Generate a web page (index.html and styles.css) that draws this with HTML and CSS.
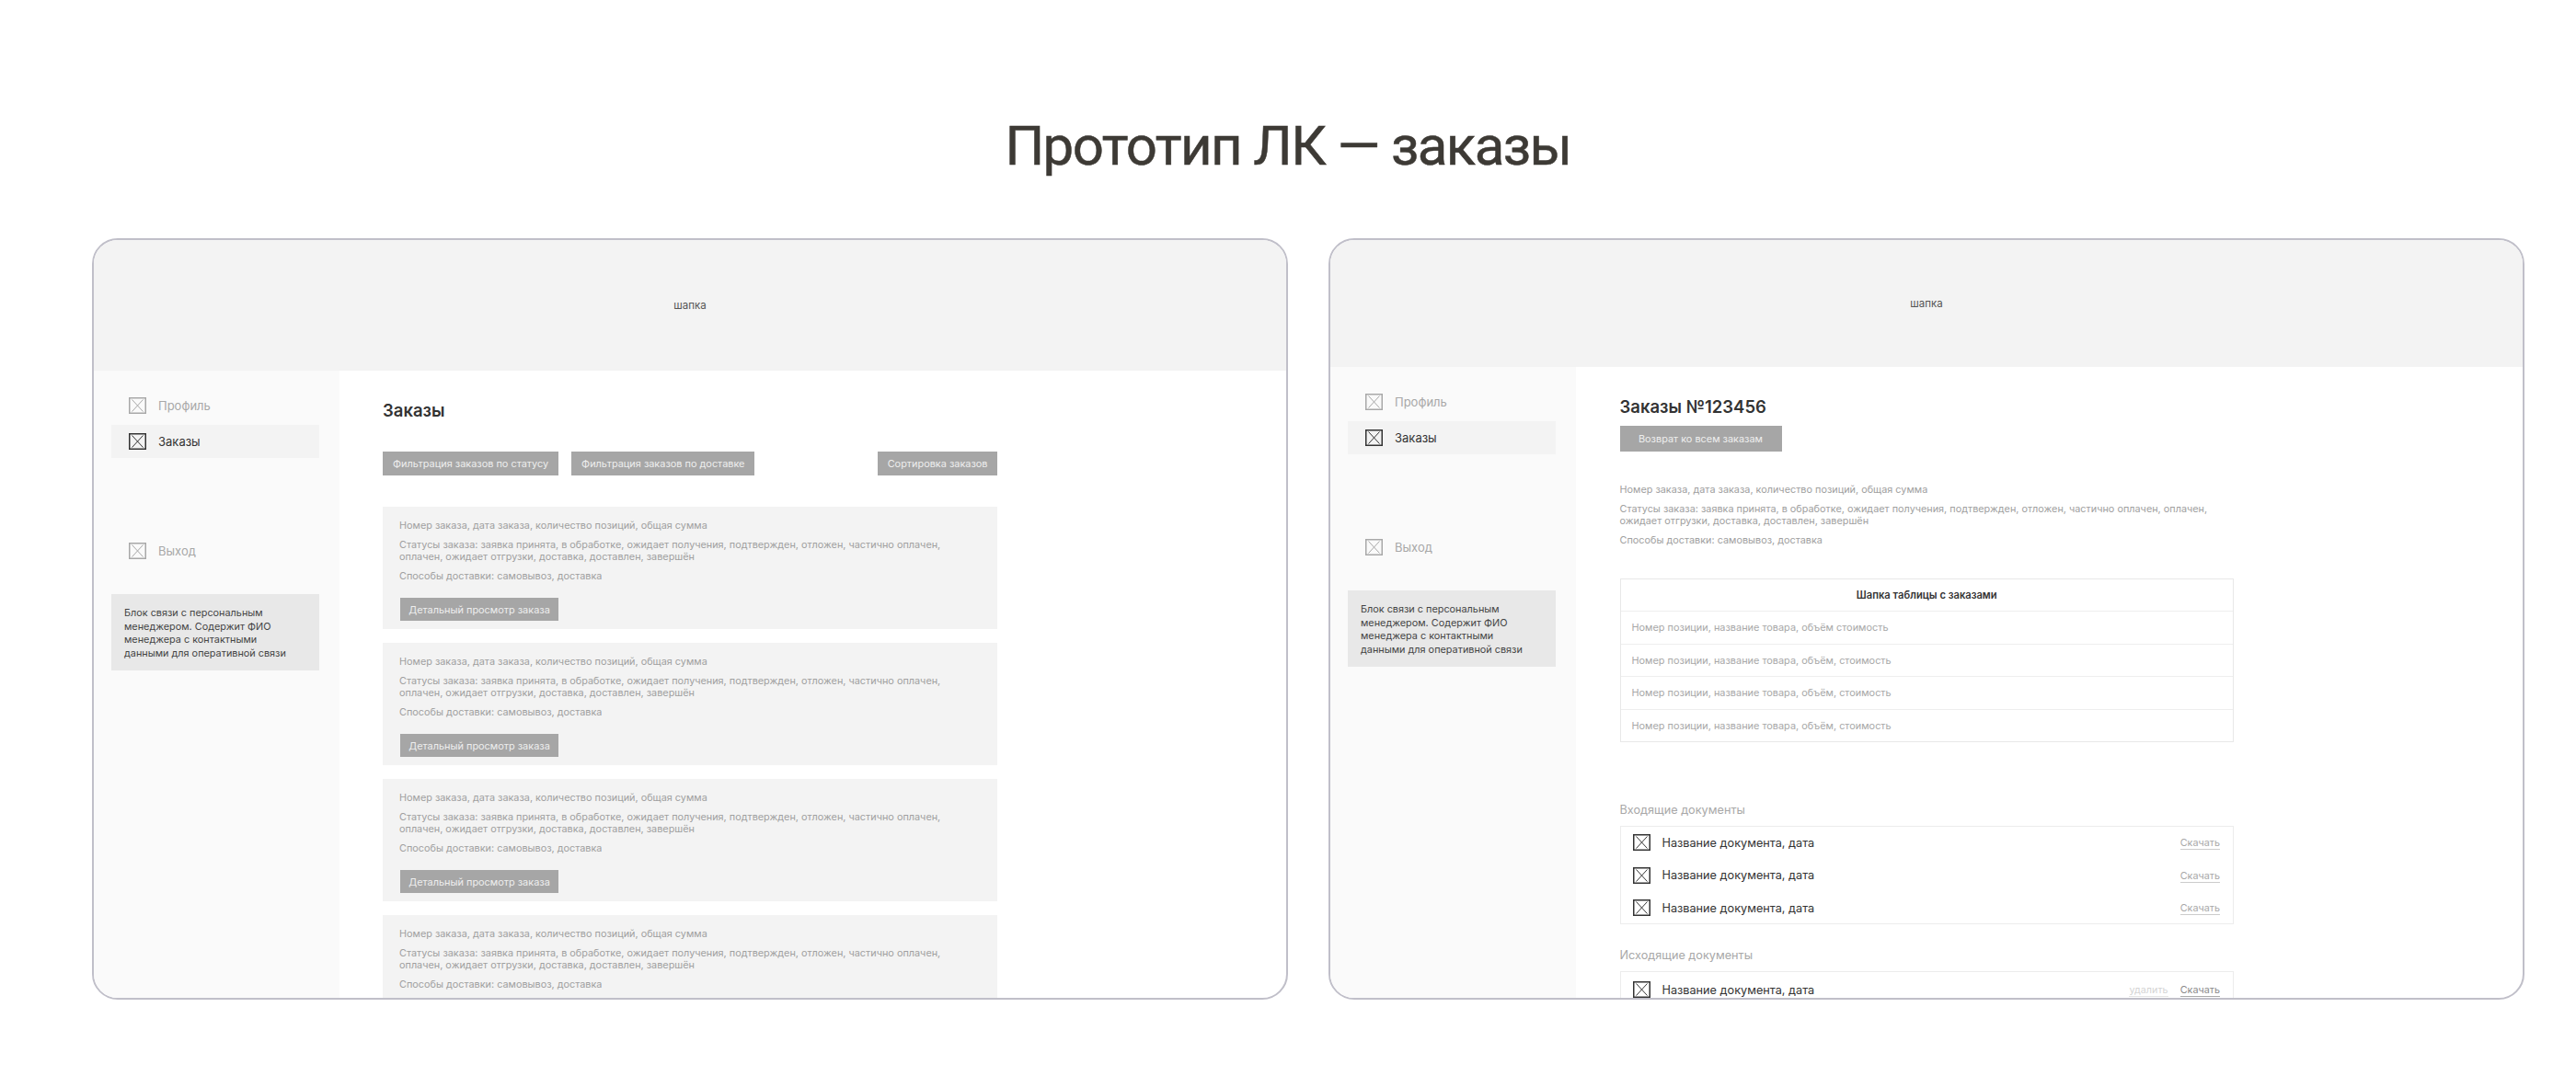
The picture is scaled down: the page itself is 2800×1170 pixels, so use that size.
FILE: index.html
```html
<!DOCTYPE html>
<html lang="ru">
<head>
<meta charset="utf-8">
<title>Прототип ЛК — заказы</title>
<link rel="stylesheet" href="styles.css">
</head>
<body>
<svg class="defs" width="0" height="0" aria-hidden="true"><symbol id="ph" viewBox="0 0 19 18"><rect x=".75" y=".75" width="17.5" height="16.5" fill="none" stroke="currentColor" stroke-width="1.5"/><path d="M3.5 2.5 15.5 15.5M15.5 2.5 3.5 15.5" fill="none" stroke="currentColor" stroke-width="1"/></symbol></svg>
<h1 class="page-title">Прототип ЛК — заказы</h1>
<div class="frames">
  <section class="frame">
    <header class="top">шапка</header>
    <div class="body">
      <aside class="side">
        <nav class="nav">
          <a class="nav-item"><svg class="ph"><use href="#ph"/></svg>Профиль</a>
          <a class="nav-item active"><svg class="ph"><use href="#ph"/></svg>Заказы</a>
          <a class="nav-item exit"><svg class="ph"><use href="#ph"/></svg>Выход</a>
        </nav>
        <div class="manager">Блок связи с персональным менеджером. Содержит ФИО менеджера с контактными данными для оперативной связи</div>
      </aside>
      <main class="main">
        <h2 class="title">Заказы</h2>
        <div class="filters">
          <span class="btn">Фильтрация заказов по статусу</span>
          <span class="btn">Фильтрация заказов по доставке</span>
          <span class="btn sort">Сортировка заказов</span>
        </div>
        <div class="cards">
          <article class="card">
            <p>Номер заказа, дата заказа, количество позиций, общая сумма</p>
            <p>Статусы заказа: заявка принята, в обработке, ожидает получения, подтвержден, отложен, частично оплачен, оплачен, ожидает отгрузки, доставка, доставлен, завершён</p>
            <p>Способы доставки: самовывоз, доставка</p>
            <span class="btn card-btn">Детальный просмотр заказа</span>
          </article>
          <article class="card">
            <p>Номер заказа, дата заказа, количество позиций, общая сумма</p>
            <p>Статусы заказа: заявка принята, в обработке, ожидает получения, подтвержден, отложен, частично оплачен, оплачен, ожидает отгрузки, доставка, доставлен, завершён</p>
            <p>Способы доставки: самовывоз, доставка</p>
            <span class="btn card-btn">Детальный просмотр заказа</span>
          </article>
          <article class="card">
            <p>Номер заказа, дата заказа, количество позиций, общая сумма</p>
            <p>Статусы заказа: заявка принята, в обработке, ожидает получения, подтвержден, отложен, частично оплачен, оплачен, ожидает отгрузки, доставка, доставлен, завершён</p>
            <p>Способы доставки: самовывоз, доставка</p>
            <span class="btn card-btn">Детальный просмотр заказа</span>
          </article>
          <article class="card">
            <p>Номер заказа, дата заказа, количество позиций, общая сумма</p>
            <p>Статусы заказа: заявка принята, в обработке, ожидает получения, подтвержден, отложен, частично оплачен, оплачен, ожидает отгрузки, доставка, доставлен, завершён</p>
            <p>Способы доставки: самовывоз, доставка</p>
          </article>
        </div>
      </main>
    </div>
  </section>
  <section class="frame frame-detail">
    <header class="top">шапка</header>
    <div class="body">
      <aside class="side">
        <nav class="nav">
          <a class="nav-item"><svg class="ph"><use href="#ph"/></svg>Профиль</a>
          <a class="nav-item active"><svg class="ph"><use href="#ph"/></svg>Заказы</a>
          <a class="nav-item exit"><svg class="ph"><use href="#ph"/></svg>Выход</a>
        </nav>
        <div class="manager">Блок связи с персональным менеджером. Содержит ФИО менеджера с контактными данными для оперативной связи</div>
      </aside>
      <main class="main">
        <h2 class="title">Заказы №123456</h2>
        <span class="btn back">Возврат ко всем заказам</span>
        <div class="info">
          <p>Номер заказа, дата заказа, количество позиций, общая сумма</p>
          <p>Статусы заказа: заявка принята, в обработке, ожидает получения, подтвержден, отложен, частично оплачен, оплачен, ожидает отгрузки, доставка, доставлен, завершён</p>
          <p>Способы доставки: самовывоз, доставка</p>
        </div>
        <div class="table">
          <div class="th">Шапка таблицы с заказами</div>
          <div class="tr">Номер позиции, название товара, объём стоимость</div>
          <div class="tr">Номер позиции, название товара, объём, стоимость</div>
          <div class="tr">Номер позиции, название товара, объём, стоимость</div>
          <div class="tr">Номер позиции, название товара, объём, стоимость</div>
        </div>
        <h3 class="doc-label first">Входящие документы</h3>
        <div class="docs">
          <div class="doc"><svg class="ph"><use href="#ph"/></svg><span class="doc-name">Название документа, дата</span><a class="link">Скачать</a></div>
          <div class="doc"><svg class="ph"><use href="#ph"/></svg><span class="doc-name">Название документа, дата</span><a class="link">Скачать</a></div>
          <div class="doc"><svg class="ph"><use href="#ph"/></svg><span class="doc-name">Название документа, дата</span><a class="link">Скачать</a></div>
        </div>
        <h3 class="doc-label">Исходящие документы</h3>
        <div class="docs docs-out">
          <div class="doc"><svg class="ph"><use href="#ph"/></svg><span class="doc-name">Название документа, дата</span><a class="link del">удалить</a><a class="link dark">Скачать</a></div>
        </div>
      </main>
    </div>
  </section>
</div>
</body>
</html>
```
FILE: styles.css
```css
* { box-sizing: border-box; }
html, body { margin: 0; height: 100%; }
body { background: #fff; font-family: Inter, "Noto Sans", sans-serif; overflow: hidden; }
.defs { position: absolute; }
.page-title { margin: 0; padding-top: 123px; height: 259px; text-align: center; font: 400 60px/72px Roboto, sans-serif; letter-spacing: -1.6px; color: #3d3a35; -webkit-text-stroke: .5px #3d3a35; }
.frames { display: flex; gap: 44px; padding-left: 100px; }
.frame { width: 1300px; height: 828px; border: 2px solid #c0bfc9; border-radius: 28px; overflow: hidden; display: flex; flex-direction: column; background: #fff; }
.top { height: 142px; flex: none; background: #f3f3f3; display: flex; align-items: center; justify-content: center; font-size: 11.5px; color: #555; }
.frame-detail .top { height: 138px; }
.body { flex: 1; display: flex; min-height: 0; }
.side { width: 267px; flex: none; background: #fafafa; padding: 20px 22px 0 19px; }
.nav { display: flex; flex-direction: column; gap: 3px; }
.nav-item { height: 36px; display: flex; align-items: center; gap: 13px; padding-left: 19px; font-size: 13px; color: #a8a8a8; }
.nav-item.active { background: #f3f3f3; color: #333; }
.nav-item.exit { margin-top: 80px; }
.ph { width: 19px; height: 18px; flex: none; color: inherit; }
.manager { margin-top: 29px; height: 83px; background: #e8e8e8; padding: 13px 24px 13px 14px; font-size: 10.85px; line-height: 14.5px; color: #444; }
.main { flex: none; width: 715px; padding: 31px 0 0 47px; }
.title { margin: 0; font-size: 18.5px; line-height: 24px; font-weight: 600; color: #333; }
.btn { display: inline-flex; align-items: center; justify-content: center; height: 26px; padding: 0 11px; background: #a6a6a6; color: #eee; font-size: 10.9px; white-space: nowrap; }
.filters { display: flex; gap: 14px; margin-top: 33px; }
.sort { margin-left: auto; padding: 0 10.5px; }
.cards { display: flex; flex-direction: column; gap: 15px; margin-top: 34px; }
.card { height: 133px; background: #f3f3f3; padding: 14px 18px 9px; flex: none; }
.card p, .info p { margin: 0 0 8px; font-size: 10.85px; line-height: 13px; color: #a0a0a0; }
.card-btn { height: 25px; width: 172px; margin-top: 9px; margin-left: 1px; }
.frame-detail .main { padding-left: 47.5px; }
.back { display: flex; width: 176px; height: 28px; margin-top: 9px; }
.info { margin-top: 35px; }
.table { margin-top: 35px; border: 1px solid #e8e8e8; }
.th { height: 34px; display: flex; align-items: center; justify-content: center; font-size: 11.2px; font-weight: 600; color: #333; }
.tr { height: 35.5px; display: flex; align-items: center; padding-left: 12px; border-top: 1px solid #eee; font-size: 10.9px; color: #a8a8a8; }
.doc-label { margin: 26px 0 9px; font-size: 12.7px; line-height: 16px; font-weight: 400; color: #a8a8a8; }
.doc-label.first { margin-top: 66px; }
.docs { border: 1px solid #ececec; padding: 8px 14px 8px 13px; display: flex; flex-direction: column; gap: 17.5px; }
.docs-out { padding-top: 10px; }
.doc { display: flex; align-items: center; gap: 13px; height: 18px; font-size: 12.7px; color: #333; }
.doc-name { flex: 1; }
.link { font-size: 10.8px; line-height: 13px; color: #a8a8a8; border-bottom: 1.5px solid #ccc; margin-top: 2px; }
.link.del { color: #d4d4d4; border-color: #e4e4e4; }
.link.dark { color: #8a8a8a; border-color: #aaa; }
```
